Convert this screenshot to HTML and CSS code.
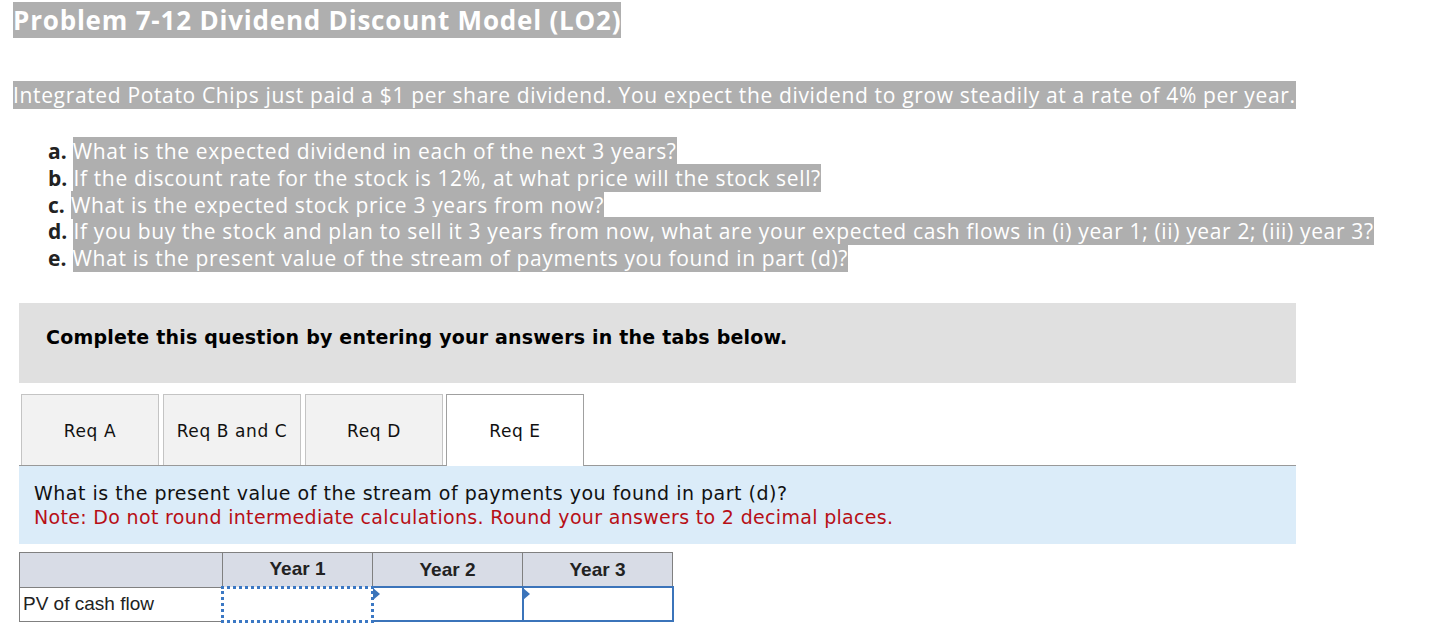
FILE: index.html
```html
<!DOCTYPE html>
<html lang="en">
<head>
    <meta charset="UTF-8">
    <title>Problem 7-12 Dividend Discount Model</title>
    <link rel="stylesheet" href="styles.css">
</head>
<body>
    <h1 class="title"><span>Problem 7-12 Dividend Discount Model (LO2)</span></h1>

    <p class="intro"><span>Integrated Potato Chips just paid a $1 per share dividend. You expect the dividend to grow steadily at a rate of 4% per year.</span></p>

    <ol class="parts">
        <li><b>a.</b> <span>What is the expected dividend in each of the next 3 years?</span></li>
        <li><b>b.</b> <span>If the discount rate for the stock is 12%, at what price will the stock sell?</span></li>
        <li><b>c.</b> <span>What is the expected stock price 3 years from now?</span></li>
        <li><b>d.</b> <span>If you buy the stock and plan to sell it 3 years from now, what are your expected cash flows in (i) year 1; (ii) year 2; (iii) year 3?</span></li>
        <li><b>e.</b> <span>What is the present value of the stream of payments you found in part (d)?</span></li>
    </ol>

    <div class="instructions">Complete this question by entering your answers in the tabs below.</div>

    <div class="tabs">
        <div class="tab">Req A</div>
        <div class="tab">Req B and C</div>
        <div class="tab">Req D</div>
        <div class="tab active">Req E</div>
    </div>

    <div class="panel">
        <div class="question">What is the present value of the stream of payments you found in part (d)?</div>
        <div class="note">Note: Do not round intermediate calculations. Round your answers to 2 decimal places.</div>
    </div>

    <table class="grid">
        <colgroup>
            <col class="c-label">
            <col class="c-year">
            <col class="c-year">
            <col class="c-year">
        </colgroup>
        <tr>
            <th class="label-col"></th>
            <th>Year 1</th>
            <th>Year 2</th>
            <th>Year 3</th>
        </tr>
        <tr>
            <td class="label-col">PV of cash flow</td>
            <td class="cell focused"></td>
            <td class="cell"><span class="marker"></span></td>
            <td class="cell"><span class="marker"></span></td>
        </tr>
    </table>
</body>
</html>
```

FILE: styles.css
```css
html, body {
    margin: 0;
    padding: 0;
}

body {
    background-color: #fff;
    color: #222;
    font-family: "Open Sans", Lato, Arial, sans-serif;
    padding-top: 3px;
}

.title {
    margin: 0 0 0 13px;
    font-size: 26px;
    font-weight: 700;
    letter-spacing: 0.8px;
    line-height: 34px;
}

.title span,
.intro span,
.parts span {
    background-color: #afafaf;
    color: #fff;
}

.intro {
    margin: 45px 0 0 13px;
    font-size: 21px;
    letter-spacing: 0.65px;
    line-height: 27px;
}

.parts {
    list-style: none;
    margin: 29px 0 0 48px;
    padding: 0;
    font-size: 21px;
    letter-spacing: 0.65px;
    line-height: 26.75px;
}

.parts b {
    color: #222;
    letter-spacing: 0;
}

.instructions {
    margin: 31px 0 0 19px;
    width: 1277px;
    height: 80px;
    box-sizing: border-box;
    padding: 22px 0 0 27px;
    background-color: #e0e0e0;
    font-family: "DejaVu Sans", Verdana, sans-serif;
    font-weight: bold;
    font-size: 19px;
    letter-spacing: 0.2px;
    line-height: 24px;
    color: #000;
}

.tabs {
    display: flex;
    gap: 4px;
    margin: 11px 0 0 21px;
    position: relative;
    z-index: 1;
}

.tab {
    width: 138px;
    height: 71px;
    box-sizing: border-box;
    border: 1px solid #c4c4c4;
    border-bottom: none;
    background-color: #f2f2f2;
    display: flex;
    align-items: center;
    justify-content: center;
    padding-top: 2px;
    font-family: "DejaVu Sans", Verdana, sans-serif;
    font-size: 17px;
    letter-spacing: 0.6px;
    color: #111;
}

.tab.active {
    background-color: #fff;
    border-color: #a0a0a0;
    margin-left: -1px;
    height: 72px;
    margin-bottom: -1px;
}

.panel {
    margin-left: 19px;
    width: 1277px;
    height: 79px;
    box-sizing: border-box;
    border-top: 1px solid #999;
    background-color: #dbecf9;
    padding: 15px 0 0 15px;
    font-family: "DejaVu Sans", Verdana, sans-serif;
    font-size: 19px;
    line-height: 24px;
}

.question {
    color: #111;
    letter-spacing: 0.5px;
}

.note {
    color: #b70f16;
    letter-spacing: 0.32px;
}

.grid {
    margin: 8px 0 0 19px;
    width: 654px;
    table-layout: fixed;
    border-collapse: collapse;
    font-family: "Liberation Sans", Arial, sans-serif;
}

.c-label {
    width: 203px;
}

.c-year {
    width: 150px;
}

.grid th,
.grid td {
    border: 1px solid #808080;
    padding: 0;
}

.grid th {
    background-color: #d8dce6;
    height: 33px;
    font-size: 19px;
    color: #222;
}

.grid td {
    height: 31px;
}

.grid .label-col {
    text-align: left;
    padding-left: 3px;
    font-size: 19px;
    color: #222;
}

.grid .cell {
    position: relative;
    border: 2px solid #3b74ba;
}

.grid .cell.focused {
    border: 3px dotted #3b78c4;
}

.marker {
    position: absolute;
    left: -1px;
    top: 0;
    width: 0;
    height: 0;
    border-top: 6px solid transparent;
    border-bottom: 6px solid transparent;
    border-left: 7px solid #3b74ba;
}
```
